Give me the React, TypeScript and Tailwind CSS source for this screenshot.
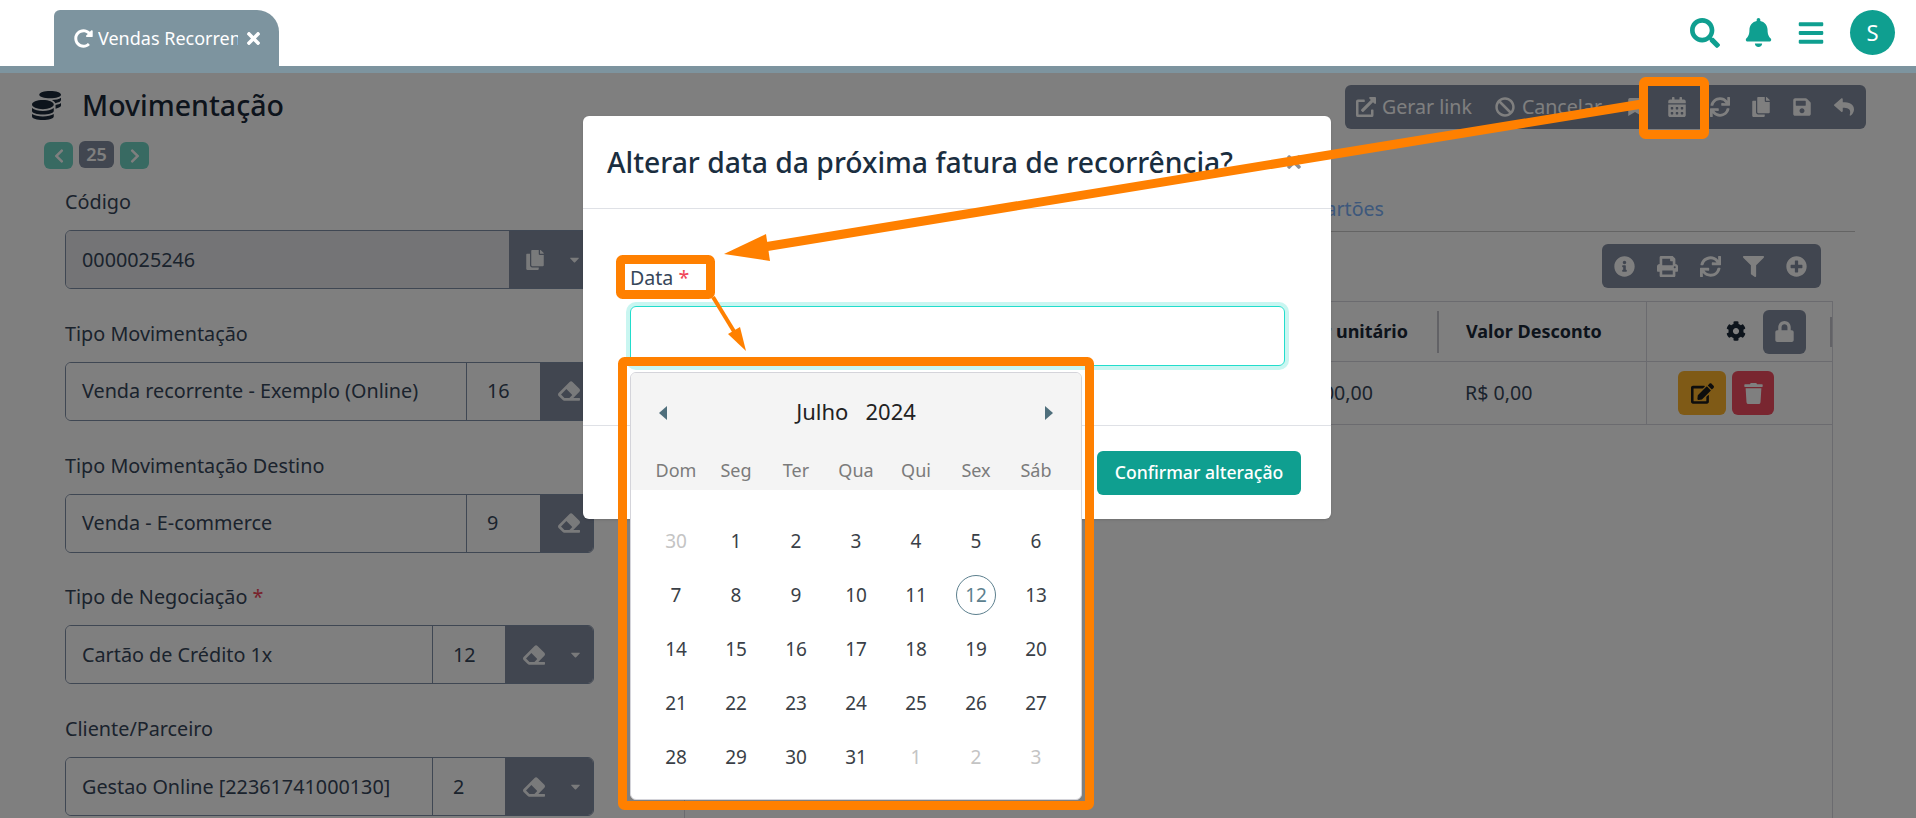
import {
  FaBan, FaBars, FaBell, FaBookmark, FaCalendarAlt, FaCaretDown, FaCog, FaCoins, FaCopy, FaChevronLeft, FaChevronRight,
  FaEdit, FaEraser, FaExternalLinkAlt, FaFilter, FaInfoCircle, FaLock, FaPlusCircle, FaPrint, FaRedoAlt,
  FaReply, FaSave, FaSearch, FaSync, FaTimes, FaTrash,
} from 'react-icons/fa'

type FieldProps = {
  label: string
  value: string
  code?: string
  required?: boolean
  readOnly?: boolean
  wide?: boolean
}

const weekdays = ['Dom', 'Seg', 'Ter', 'Qua', 'Qui', 'Sex', 'Sáb']
const days: [string, boolean][] = [
  ['30', true], ['1', false], ['2', false], ['3', false], ['4', false], ['5', false], ['6', false],
  ['7', false], ['8', false], ['9', false], ['10', false], ['11', false], ['12', false], ['13', false],
  ['14', false], ['15', false], ['16', false], ['17', false], ['18', false], ['19', false], ['20', false],
  ['21', false], ['22', false], ['23', false], ['24', false], ['25', false], ['26', false], ['27', false],
  ['28', false], ['29', false], ['30', false], ['31', false], ['1', true], ['2', true], ['3', true],
]

function Field({ label, value, code, required, readOnly, wide }: FieldProps) {
  return (
    <div>
      <label className="mb-4 block h-6 text-[19.8px] leading-6 text-[#36465a]">
        {label} {required ? <span className="text-[#f0465a]">*</span> : null}
      </label>
      <div className="flex h-[59px] w-[529px] overflow-hidden rounded-md border border-[#7f8ea6]">
        <div className={`flex min-w-0 flex-1 items-center whitespace-nowrap pl-4 text-[19.8px] text-[#36465a] ${readOnly ? 'bg-[#e8e9ec]' : 'bg-white'}`}>
          {value}
        </div>
        {code ? (
          <div className={`flex items-center border-l border-[#7f8ea6] bg-white pl-5 text-[19.8px] text-[#36465a] ${wide ? 'w-[73px]' : 'w-[74px]'}`}>{code}</div>
        ) : null}
        <div className={`flex items-center bg-[#828ca0] text-white/90 ${readOnly ? 'w-[84px]' : wide ? 'w-[88px]' : 'w-[53px]'}`}>
          {readOnly ? <FaCopy className="ml-4 text-[20px]" /> : <FaEraser className="ml-[18px] text-[22px]" />}
          {wide ? <FaCaretDown className={`text-[15px] ${readOnly ? 'ml-[22px]' : 'ml-[23px]'}`} /> : null}
        </div>
      </div>
    </div>
  )
}

export default function App() {
  return (
    <div className="relative h-[818px] w-full overflow-hidden bg-white font-['Noto_Sans',sans-serif] text-[#36465a]">
      <header className="relative flex h-[66px] items-start bg-white pl-[54px]">
        <div className="mt-[10px] flex h-14 w-[225px] items-center rounded-tl-md rounded-tr-[22px] bg-[#7d949f] pl-5 text-[18px] text-white">
          <FaRedoAlt className="mr-[5px] shrink-0 text-[19px]" />
          <span className="w-[140px] overflow-hidden whitespace-nowrap">Vendas Recorrentes</span>
          <FaTimes className="ml-[6px] shrink-0 text-[19px]" />
        </div>
        <div className="ml-auto mr-[21px] mt-[10px] flex items-center text-[#0f9f90]">
          <FaSearch className="text-[30px]" />
          <FaBell className="ml-[24px] text-[29px]" />
          <FaBars className="ml-[24px] text-[28px]" />
          <div className="ml-[25px] flex h-[45px] w-[45px] items-center justify-center rounded-full bg-[#0f9f90] text-[22px] text-white">S</div>
        </div>
      </header>
      <div className="h-[7px] bg-[#7d949f]" />

      <main className="flex h-[745px] bg-white">
        <section className="w-[684px] shrink-0 pl-[65px]">
          <div className="-ml-[33px] mt-[16px] flex h-[32px] items-center">
            <FaCoins className="text-[29px] text-[#1a2838]" />
            <h1 className="ml-[21px] text-[28.5px] font-medium text-[#1a2838]">Movimentação</h1>
          </div>
          <div className="-ml-[21px] mt-[21px] flex items-center">
            <div className="flex h-[27px] w-[29px] items-center justify-center rounded-md bg-[#70d4c4] text-white"><FaChevronLeft className="text-[16px]" /></div>
            <div className="ml-[6px] -mt-[2px] flex h-[27px] w-[35px] items-center justify-center rounded-md bg-[#828ca0] text-[18px] font-semibold text-white">25</div>
            <div className="ml-[6px] flex h-[27px] w-[29px] items-center justify-center rounded-md bg-[#70d4c4] text-white"><FaChevronRight className="text-[16px]" /></div>
          </div>
          <div className="mt-[21px] flex flex-col gap-[32.75px]">
            <Field label="Código" value="0000025246" readOnly wide />
            <Field label="Tipo Movimentação" value="Venda recorrente - Exemplo (Online)" code="16" />
            <Field label="Tipo Movimentação Destino" value="Venda - E-commerce" code="9" />
            <Field label="Tipo de Negociação" value="Cartão de Crédito 1x" code="12" required wide />
            <Field label="Cliente/Parceiro" value="Gestao Online [22361741000130]" code="2" wide />
          </div>
        </section>

        <section className="flex min-w-0 flex-1 flex-col">
          <div className="ml-auto mr-[50px] mt-[12px] flex h-11 w-[521px] items-center rounded-md bg-[#828ca0] pl-[11px] text-[19.6px] text-white">
            <FaExternalLinkAlt className="text-[20px]" />
            <span className="ml-[6px]">Gerar link</span>
            <FaBan className="ml-[23px] text-[20px]" />
            <span className="ml-[7px]">Cancelar</span>
            <FaBookmark className="ml-[24px] text-[18px]" />
            <FaCalendarAlt className="ml-[23px] text-[20px]" />
            <FaSync className="ml-[23px] text-[20px]" />
            <FaCopy className="ml-[21px] text-[20px]" />
            <FaSave className="ml-[21px] text-[20px]" />
            <FaReply className="ml-[22px] text-[20px]" />
          </div>
          <div className="mr-[61px] mt-[66px] flex h-[37px] items-start justify-end border-b border-[#c8c8c8] pr-[471px] text-[19.6px] leading-[28px] text-[#7ab0f8]">
            Cartões
          </div>
          <div className="ml-auto mr-[95px] mt-[12px] flex h-11 w-[219px] items-center gap-[22px] rounded-md bg-[#828ca0] pl-[12px] text-[21px] text-white">
            <FaInfoCircle />
            <FaPrint />
            <FaSync />
            <FaFilter />
            <FaPlusCircle />
          </div>
          <div className="mr-[83px] mt-[13px] min-h-0 flex-1 border-x border-[#d6d6de]">
            <div className="flex h-[61px] border-y border-[#d6d6de] text-[18px] font-bold text-[#1a2838]">
              <div className="flex flex-1 items-center justify-end pr-[29px]">Valor unitário</div>
              <div className="flex w-[209px] items-center">
                <div className="flex h-[42px] w-full items-center border-l-2 border-[#c4c4cc] pl-[27px]">Valor Desconto</div>
              </div>
              <div className="flex w-[186px] items-center justify-end border-l border-[#d6d6de]">
                <FaCog className="mb-[2px] text-[20px]" />
                <div className="ml-[17px] flex h-11 w-[43px] items-center justify-center rounded-md bg-[#828ca0] text-[21px] text-white"><FaLock /></div>
                <div className="ml-[24px] h-[30px] w-[2px] bg-[#c4c4cc]" />
              </div>
            </div>
            <div className="flex h-[63px] border-b border-[#d6d6de] text-[19.6px] text-[#36465a]">
              <div className="flex flex-1 items-center justify-end pr-[64px]">R$ 100,00</div>
              <div className="flex w-[209px] items-center pl-[28px]">R$ 0,00</div>
              <div className="flex w-[186px] items-center border-l border-[#d6d6de] pl-[31px]">
                <div className="flex h-11 w-12 items-center justify-center rounded-md bg-[#ffb52c] text-[23px] text-[#1a1a1a]"><FaEdit /></div>
                <div className="ml-[6px] flex h-11 w-[42px] items-center justify-center rounded-md bg-[#f24c60] text-[21px] text-white"><FaTrash /></div>
              </div>
            </div>
          </div>
        </section>
      </main>

      {/* backdrop */}
      <div className="absolute inset-x-0 bottom-0 top-[73px] bg-black/50" />

      {/* modal */}
      <div className="absolute left-[583px] top-[116px] flex h-[403px] w-[748px] flex-col rounded-md bg-white shadow-sm">
        <div className="flex h-[93px] shrink-0 items-center justify-between border-b border-[#dfe1e6] pl-6 pr-[27px]">
          <h2 className="whitespace-nowrap text-[28.3px] font-medium text-[#1a2e40]">Alterar data da próxima fatura de recorrência?</h2>
          <FaTimes className="text-[20px] text-[#8a8f96]" />
        </div>
        <div className="flex-1 pl-[47px] pt-[57px]">
          <label className="block h-6 text-[19.6px] leading-6 text-[#36465a]">
            Data <span className="text-[#f0465a]">*</span>
          </label>
          <div className="mt-[16px] h-[60px] w-[655px] rounded-md border border-[#22ddcc] shadow-[0_0_0_4px_#c9f6f1]" />
        </div>
        <div className="flex h-[94px] shrink-0 items-center justify-end border-t border-[#dfe1e6] pr-[30px]">
          <button className="flex h-[44px] w-[204px] items-center justify-center rounded-md bg-[#0f9f90] text-[17.6px] font-medium text-white">Confirmar alteração</button>
        </div>
      </div>

      {/* date picker */}
      <div className="absolute left-[630px] top-[372px] h-[428px] w-[452px] overflow-hidden rounded-md border border-[#d4d4da] bg-white">
        <div className="h-[117px] bg-[#f4f4f4]">
          <div className="flex h-[79px] items-center justify-between px-[28px]">
            <svg width="8" height="14" viewBox="0 0 8 14"><polygon points="8,0 8,14 0,7" fill="#4f6f7c" /></svg>
            <span className="-mt-[3px] whitespace-pre text-[22px] text-[#222]">Julho   2024</span>
            <svg width="8" height="14" viewBox="0 0 8 14"><polygon points="0,0 0,14 8,7" fill="#4f6f7c" /></svg>
          </div>
          <div className="mt-[5px] grid grid-cols-[repeat(7,60px)] pl-[15px] text-center text-[18px] text-[#7b7b7b]">
            {weekdays.map((day) => <span key={day}>{day}</span>)}
          </div>
        </div>
        <div className="mt-[24px] grid grid-cols-[repeat(7,60px)] pl-[15px] text-center text-[19px] text-[#3a3f47]">
          {days.map(([day, muted], index) => (
            <div key={index} className="flex h-[54px] items-center justify-center">
              <span className={`flex h-[40px] w-[40px] items-center justify-center rounded-full ${muted ? 'text-[#c4c4c4]' : ''} ${day === '12' ? 'border border-[#5c7f8e] text-[#5c7f8e]' : ''}`}>{day}</span>
            </div>
          ))}
        </div>
      </div>

      {/* orange annotations */}
      <svg className="pointer-events-none absolute inset-0" width="1916" height="818">
        <rect x="1643.5" y="81.5" width="61" height="53" rx="2" fill="none" stroke="#ff8000" strokeWidth="9" />
        <rect x="620.5" y="259.5" width="90" height="35" rx="2" fill="none" stroke="#ff8000" strokeWidth="9" />
        <rect x="622.5" y="361.5" width="467" height="444" rx="2" fill="none" stroke="#ff8000" strokeWidth="9" />
        <line x1="1642" y1="104" x2="764" y2="247" stroke="#ff8000" strokeWidth="9" />
        <polygon points="724,254 766,234 770,261" fill="#ff8000" />
        <line x1="713" y1="297" x2="735" y2="333" stroke="#ff8000" strokeWidth="4" />
        <polygon points="746,351 728,334 740,327" fill="#ff8000" />
      </svg>
    </div>
  )
}
